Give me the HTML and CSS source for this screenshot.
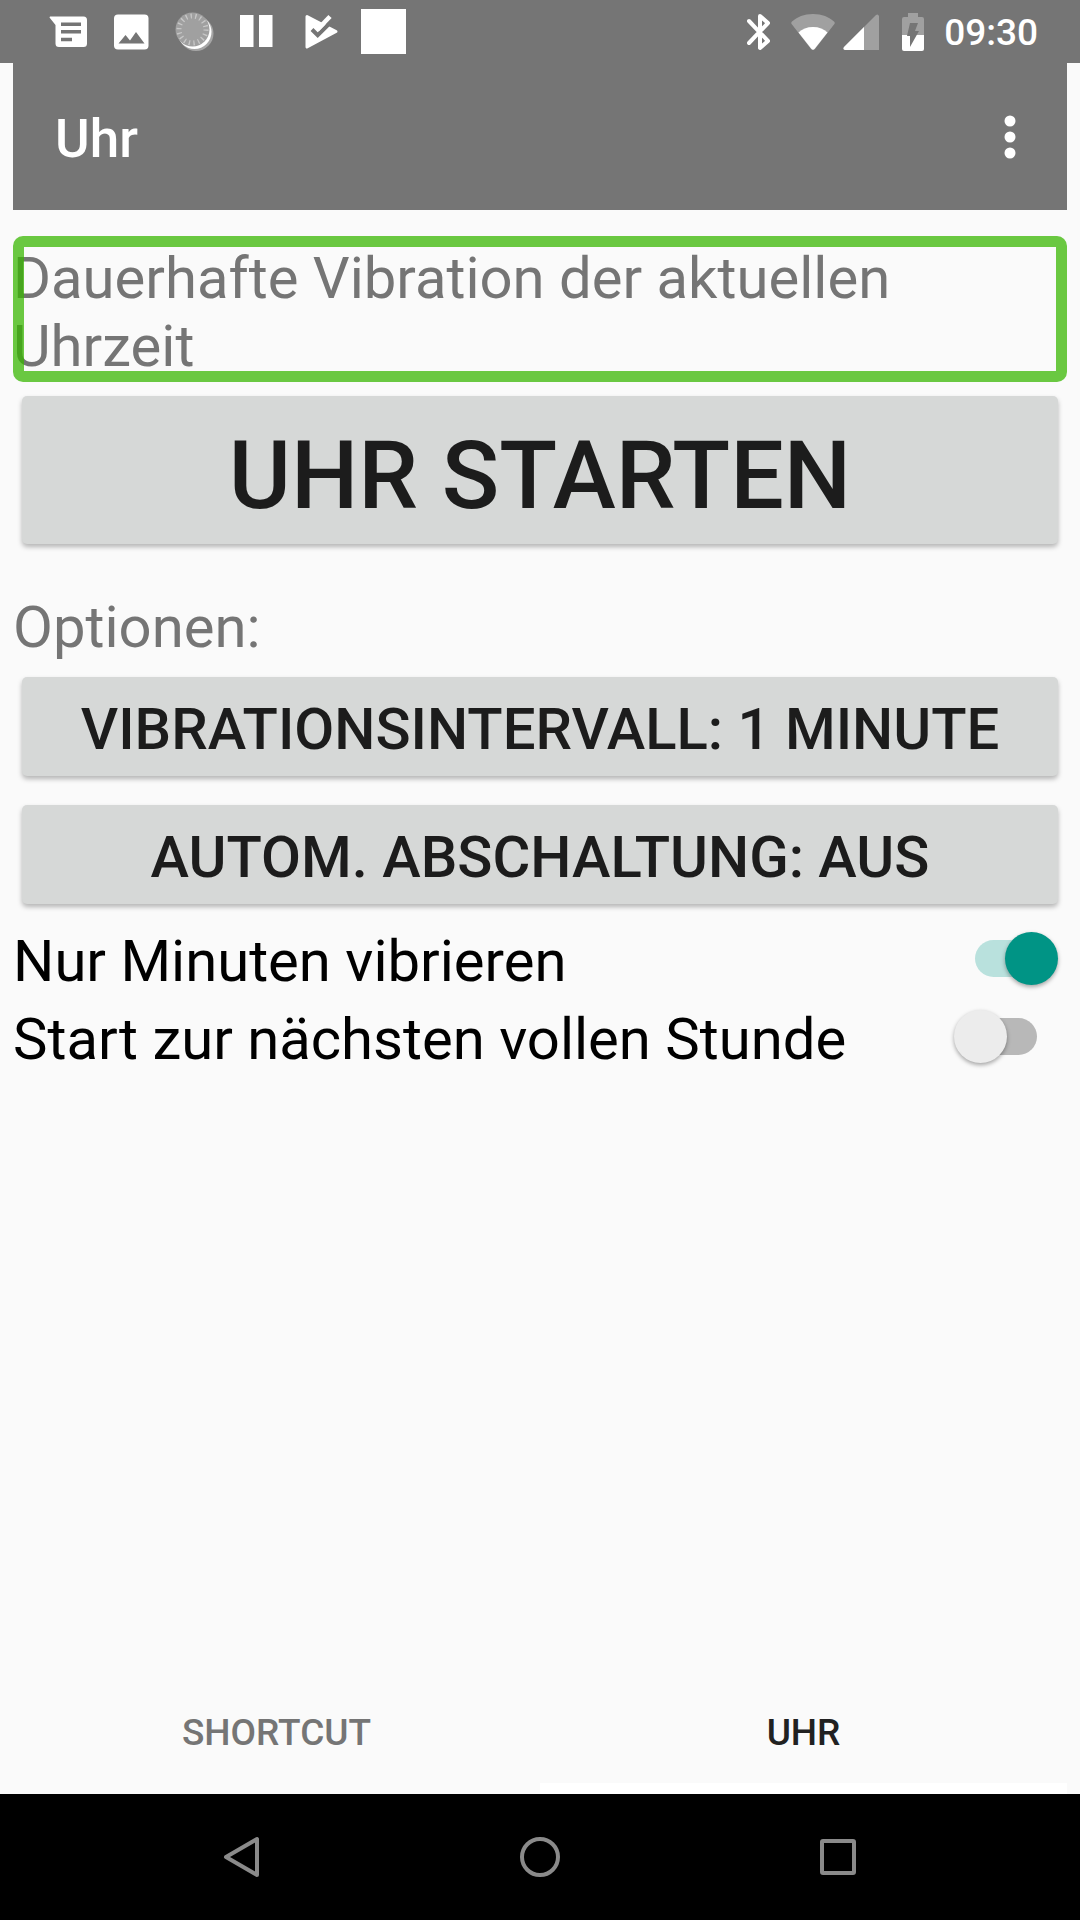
FILE: index.html
```html
<!DOCTYPE html>
<html lang="de">
<head>
  <meta charset="utf-8">
  <meta name="viewport" content="width=device-width, initial-scale=1">
  <title>Uhr</title>
  <link rel="stylesheet" href="styles.css">
</head>
<body>
  <div class="status-bar">
    <div class="notifications">
      <svg class="status-icon" viewBox="0 0 48 48" aria-hidden="true">
        <path fill="#fff" d="M3 8.500h33.500a3.500 3.500 0 0 1 3.500 3.500v23.500a3.500 3.500 0 0 1-3.500 3.500H12a3.500 3.500 0 0 1-3.500-3.500V17l-6-7.500z"/>
        <path stroke="#757575" stroke-width="3.500" d="M14 16.200h20M14 23.800h20M14 31.500h11"/>
      </svg>
      <svg class="status-icon" viewBox="0 0 48 48" aria-hidden="true">
        <rect x="5" y="6.500" width="34.500" height="35" rx="4" fill="#fff"/>
        <path fill="#757575" d="M9.500 35.500l7-8.500 4.500 5.500 6-8.500 8.500 11.500z"/>
      </svg>
      <svg class="status-icon" viewBox="0 0 48 48" aria-hidden="true">
        <circle cx="25" cy="25.500" r="17.500" fill="#a6a6a6"/>
        <circle cx="23.500" cy="24" r="17" fill="#fff"/>
        <circle cx="21.500" cy="21.500" r="17" fill="#a0a0a0"/>
        <circle cx="21.500" cy="21.500" r="13.500" fill="none" stroke="#c8c8c8" stroke-width="5" stroke-dasharray="1.300 3.412"/>
      </svg>
      <svg class="status-icon" viewBox="0 0 48 48" aria-hidden="true">
        <path fill="#fff" d="M7 7h13.500v32H7zM26 7h13.500v32H26z"/>
      </svg>
      <svg class="status-icon" viewBox="0 0 48 48" aria-hidden="true">
        <path fill="#fff" stroke="#fff" stroke-width="3" stroke-linejoin="round" d="M12 8.500L41 23.500 12 39z"/>
        <path fill="none" stroke="#757575" stroke-width="4" d="M17 21.500l5.700 5.700L37.500 12.500"/>
        <path fill="none" stroke="#fff" stroke-width="4.500" d="M22.500 21.500L35 8.500"/>
      </svg>
      <span class="notification-square"></span>
    </div>
    <div class="system-icons">
      <svg class="icon-bluetooth" viewBox="0 0 24 38" aria-hidden="true">
        <path fill="none" stroke="#fff" stroke-width="4" stroke-linecap="round" stroke-linejoin="round" d="M2 8l19 20-8 7V3l8 7L2 30"/>
      </svg>
      <svg class="icon-wifi" viewBox="0 0 44 37" aria-hidden="true">
        <path fill="#a0a0a0" d="M22 1C13 1 6 4 1 8.500c-1 1-1 2 0 3L20 36q2 2 4 0l19-24.500c1-1 1-2 0-3C38 4 31 1 22 1z"/>
        <path fill="#fff" d="M22 14c-6 0-11 2-14.500 5.500L20.500 36q1.500 1.500 3 0l13-16.500C33 16 28 14 22 14z"/>
      </svg>
      <svg class="icon-signal" viewBox="0 0 36 36" aria-hidden="true">
        <path fill="#a0a0a0" d="M1 33L33 1q2-1.500 3 1v34H2q-2.500-.5-1-3z"/>
        <path fill="#fff" d="M1 33L21 13v23H2q-2.500-.5-1-3z"/>
      </svg>
      <svg class="icon-battery" viewBox="0 0 22 38" aria-hidden="true">
        <path fill="#a0a0a0" d="M6 0h10v4h4q2 0 2 2v16H0V6q0-2 2-2h4z"/>
        <path fill="#fff" d="M0 22h22v14q0 2-2 2H2q-2 0-2-2z"/>
        <path fill="#757575" d="M8 10h8l-3 8h4L8 34v-11H5z"/>
      </svg>
      <time class="clock">09:30</time>
    </div>
  </div>

  <div class="app">
    <header class="toolbar">
      <h1 class="title">Uhr</h1>
      <button class="menu-button" type="button" aria-label="Weitere Optionen">
        <svg viewBox="0 0 12 44" aria-hidden="true">
          <g fill="#fff"><circle cx="6" cy="6" r="5.500"/><circle cx="6" cy="22" r="5.500"/><circle cx="6" cy="38" r="5.500"/></g>
        </svg>
      </button>
    </header>

    <main class="content">
      <p class="description">Dauerhafte Vibration der aktuellen Uhrzeit</p>
      <button class="button button-start" type="button">UHR STARTEN</button>
      <h2 class="section-label">Optionen:</h2>
      <div class="option-buttons">
        <button class="button" type="button">VIBRATIONSINTERVALL: 1 MINUTE</button>
        <button class="button" type="button">AUTOM. ABSCHALTUNG: AUS</button>
      </div>
      <div class="switches">
        <div class="switch-row">
          <label for="minutes-only">Nur Minuten vibrieren</label>
          <input class="switch" id="minutes-only" type="checkbox" role="switch" checked>
        </div>
        <div class="switch-row">
          <label for="full-hour">Start zur nächsten vollen Stunde</label>
          <input class="switch" id="full-hour" type="checkbox" role="switch">
        </div>
      </div>
    </main>

    <nav class="tabs">
      <button class="tab" type="button">SHORTCUT</button>
      <button class="tab tab-active" type="button">UHR</button>
    </nav>
  </div>

  <nav class="navigation-bar">
    <button class="nav-button" type="button" aria-label="Zurück">
      <svg viewBox="0 0 44 44" aria-hidden="true"><path d="M37 4v36L6 22z"/></svg>
    </button>
    <button class="nav-button" type="button" aria-label="Startseite">
      <svg viewBox="0 0 44 44" aria-hidden="true"><circle cx="22" cy="22" r="18"/></svg>
    </button>
    <button class="nav-button" type="button" aria-label="Übersicht">
      <svg viewBox="0 0 44 44" aria-hidden="true"><rect x="6" y="6" width="32" height="32" rx="1"/></svg>
    </button>
  </nav>
</body>
</html>
```
FILE: styles.css
```css
*,
*::before,
*::after {
  box-sizing: border-box;
}

body {
  display: flex;
  flex-direction: column;
  min-height: 100vh;
  margin: 0;
  background: #fafafa;
  color: #000;
  font-family: Roboto, "Liberation Sans", sans-serif;
  font-size: 58px;
  line-height: 68px;
}

h1,
h2,
p {
  margin: 0;
}

button {
  padding: 0;
  border: 0;
  background: none;
  color: inherit;
  font: inherit;
  cursor: pointer;
}

svg {
  display: block;
}

/* Status bar */

.status-bar {
  display: flex;
  justify-content: space-between;
  height: 63px;
  padding: 0 42px 0 47px;
  background: #757575;
  color: #fff;
}

.notifications {
  display: flex;
  align-items: center;
  gap: 14px;
}

.status-icon {
  width: 48px;
  height: 48px;
}

.notification-square {
  width: 45px;
  height: 45px;
  margin-left: 4px;
  background: #fff;
}

.system-icons {
  display: flex;
  align-items: center;
}

.icon-bluetooth {
  width: 24px;
  height: 38px;
  margin-right: 20px;
}

.icon-wifi {
  width: 44px;
  height: 37px;
  margin-right: 8px;
}

.icon-signal {
  width: 36px;
  height: 36px;
  margin-right: 23px;
}

.icon-battery {
  width: 22px;
  height: 38px;
  margin-right: 20px;
}

.clock {
  padding-top: 3px;
  font-size: 37px;
  font-weight: 500;
  line-height: 44px;
}

/* App */

.app {
  display: flex;
  flex: 1;
  flex-direction: column;
  padding: 0 13px;
}

.toolbar {
  display: flex;
  align-items: center;
  justify-content: space-between;
  height: 147px;
  padding: 0 51px 0 42px;
  background: #757575;
  color: #fff;
}

.title {
  padding-top: 4px;
  font-size: 53px;
  font-weight: 500;
}

.menu-button svg {
  width: 12px;
  height: 44px;
}

.content {
  display: flex;
  flex: 1;
  flex-direction: column;
  padding-top: 26px;
}

.description {
  position: relative;
  padding: 8px 0 2px;
  color: #757575;
}

/* Focus frame, drawn over the text */
.description::after {
  position: absolute;
  inset: 0;
  border: 11px solid rgba(55, 182, 0, 0.74);
  border-radius: 10px;
  content: "";
}

.button {
  min-height: 99px;
  margin: 0 9px;
  padding-top: 5px;
  border-radius: 5px;
  background: #d6d8d7;
  box-shadow: 0 3px 5px rgba(0, 0, 0, 0.28);
  color: #1c1c1c;
  font-weight: 500;
}

.button-start {
  min-height: 148px;
  margin-top: 14px;
  padding-top: 12px;
  font-size: 95px;
  line-height: 112px;
}

.section-label {
  margin: 49px 0 16px;
  color: #757575;
  font-size: 58px;
  font-weight: 400;
}

.option-buttons {
  display: flex;
  flex-direction: column;
  gap: 29px;
}

.switches {
  margin-top: 15px;
}

.switch-row {
  display: flex;
  align-items: center;
  justify-content: space-between;
  height: 78px;
  padding-right: 9px;
}

.switch-row label {
  padding-top: 6px;
}

.switch {
  display: grid;
  align-items: center;
  width: 104px;
  height: 53px;
  margin: 0;
  appearance: none;
  cursor: pointer;
}

.switch::before,
.switch::after {
  grid-area: 1 / 1;
  content: "";
}

.switch::before {
  justify-self: center;
  width: 62px;
  height: 37px;
  border-radius: 19px;
  background: #b8b8b8;
}

.switch::after {
  justify-self: start;
  width: 53px;
  height: 53px;
  border-radius: 50%;
  background: #ececec;
  box-shadow: 0 2px 4px rgba(0, 0, 0, 0.35);
}

.switch:checked::before {
  background: #b9e1dd;
}

.switch:checked::after {
  justify-self: end;
  background: #009485;
}

/* Tabs */

.tabs {
  display: flex;
  height: 114px;
}

.tab {
  flex: 1;
  padding-top: 2px;
  border-bottom: 11px solid transparent;
  color: #757575;
  font-size: 37px;
  font-weight: 500;
  line-height: 44px;
}

.tab-active {
  border-bottom-color: #fff;
  color: #212121;
}

/* System navigation */

.navigation-bar {
  display: flex;
  justify-content: center;
  gap: 254px;
  height: 126px;
  background: #000;
}

.nav-button svg {
  width: 44px;
  height: 44px;
  fill: none;
  stroke: #8a8a8a;
  stroke-width: 4;
  stroke-linejoin: round;
}
```
